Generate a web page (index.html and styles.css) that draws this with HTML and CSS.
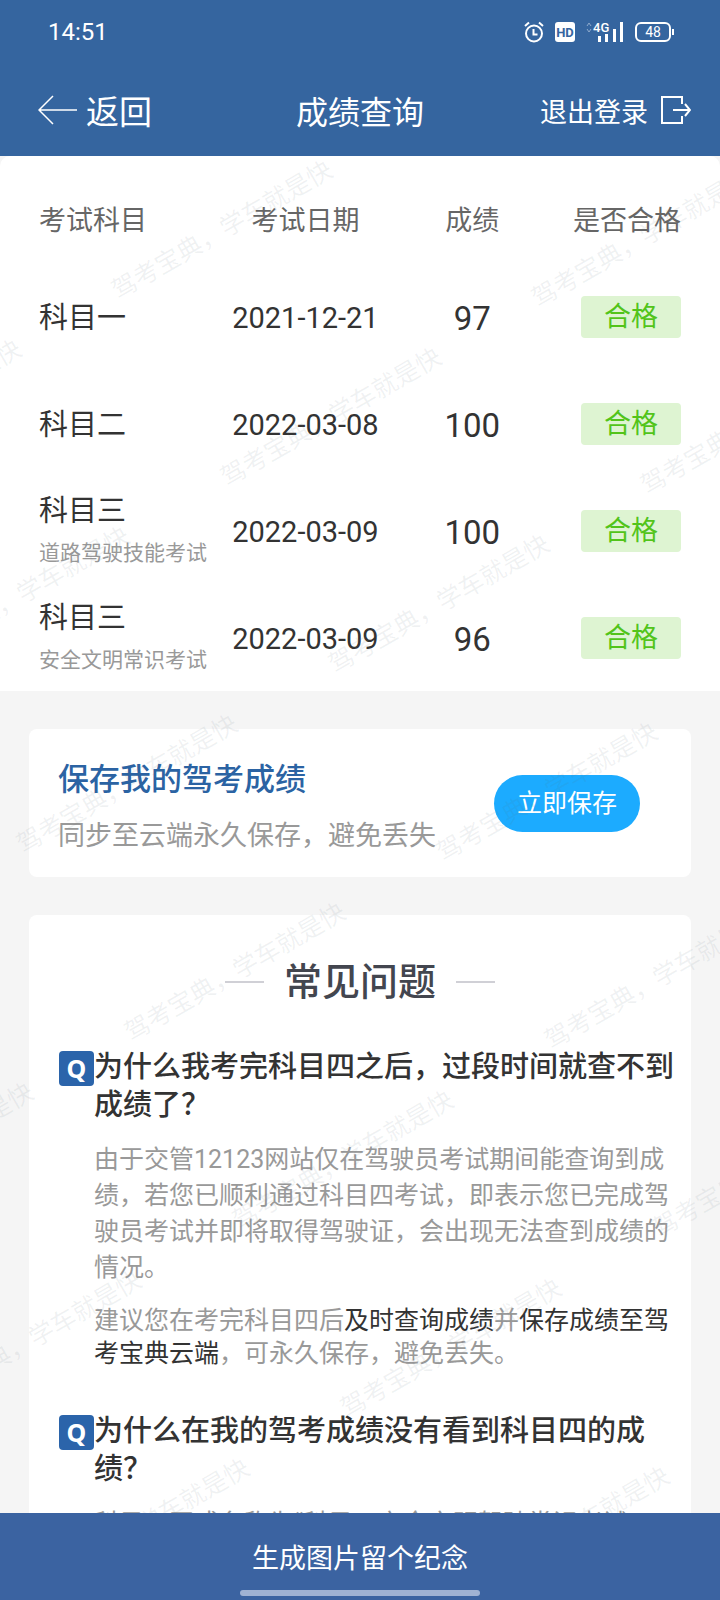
FILE: index.html
```html
<!DOCTYPE html>
<html lang="zh-CN">

<head>
    <meta charset="UTF-8">
    <meta name="viewport" content="width=device-width, initial-scale=1.0">
    <title>成绩查询</title>
    <link rel="stylesheet" href="styles.css">
</head>

<body>
    <header class="top">
        <div class="status">
            <span class="time">14:51</span>
            <div class="status-icons">
                <svg width="20" height="22" viewBox="0 0 20 22" fill="none" stroke="#fff" stroke-width="2">
                    <circle cx="10" cy="12.5" r="8" />
                    <path d="M9.5 8v5.500h4" />
                    <path d="M1 5l4-3.500M19 5l-4-3.500" />
                </svg>
                <svg width="20" height="20" viewBox="0 0 20 20">
                    <rect width="20" height="20" rx="3" fill="#fff" />
                    <text class="hd" x="10" y="15" text-anchor="middle">HD</text>
                </svg>
                <svg width="38" height="20" viewBox="0 0 38 20">
                    <path d="M1 4l2-3 2 3M1 7l2 3 2-3" fill="none" stroke="#8fabcd" stroke-width="1" />
                    <text class="net" x="7" y="10">4G</text>
                    <path d="M12 14h3v6h-3zM19 12h3v8h-3zM27 7h3v13h-3zM34 0h3v20h-3z" fill="#fff" />
                </svg>
                <svg width="39" height="20" viewBox="0 0 39 20">
                    <rect x="1" y="1" width="34" height="18" rx="5" fill="none" stroke="#fff" stroke-width="2" />
                    <rect x="37" y="7" width="2" height="6" fill="#fff" />
                    <text class="battery" x="18" y="15" text-anchor="middle">48</text>
                </svg>
            </div>
        </div>
        <nav class="nav">
            <a class="back" href="#">
                <svg width="39" height="30" viewBox="0 0 39 30" fill="none" stroke="#fff" stroke-width="1.500">
                    <path d="M15 1L1 15l14 14M1 15h38" />
                </svg>
                返回
            </a>
            <h1 class="title">成绩查询</h1>
            <a class="logout" href="#">
                退出登录
                <svg width="30" height="30" viewBox="0 0 30 30" fill="none" stroke="#fff" stroke-width="2">
                    <path d="M21 9V2H1v26h20v-7M12 15h17M24 9l5 6-5 6" />
                </svg>
            </a>
        </nav>
    </header>

    <main class="main">
        <div class="content">
            <section class="scores">
                <table class="score-table">
                    <thead>
                        <tr>
                            <th class="col-subject">考试科目</th>
                            <th class="col-date">考试日期</th>
                            <th class="col-score">成绩</th>
                            <th class="col-pass">是否合格</th>
                        </tr>
                    </thead>
                    <tbody>
                        <tr>
                            <td class="col-subject">科目一</td>
                            <td class="col-date">2021-12-21</td>
                            <td class="col-score">97</td>
                            <td class="col-pass"><span class="badge">合格</span></td>
                        </tr>
                        <tr>
                            <td class="col-subject">科目二</td>
                            <td class="col-date">2022-03-08</td>
                            <td class="col-score">100</td>
                            <td class="col-pass"><span class="badge">合格</span></td>
                        </tr>
                        <tr>
                            <td class="col-subject">科目三<small>道路驾驶技能考试</small></td>
                            <td class="col-date">2022-03-09</td>
                            <td class="col-score">100</td>
                            <td class="col-pass"><span class="badge">合格</span></td>
                        </tr>
                        <tr>
                            <td class="col-subject">科目三<small>安全文明常识考试</small></td>
                            <td class="col-date">2022-03-09</td>
                            <td class="col-score">96</td>
                            <td class="col-pass"><span class="badge">合格</span></td>
                        </tr>
                    </tbody>
                </table>
            </section>

            <section class="card save">
                <div class="save-info">
                    <h2 class="save-title">保存我的驾考成绩</h2>
                    <p class="save-text">同步至云端永久保存，避免丢失</p>
                </div>
                <button class="save-button" type="button">立即保存</button>
            </section>

            <section class="card faq">
                <h2 class="faq-title">常见问题</h2>
                <article class="faq-item">
                    <span class="q">Q</span>
                    <div>
                        <h3 class="question">为什么我考完科目四之后，过段时间就查不到成绩了？</h3>
                        <p class="answer">由于交管12123网站仅在驾驶员考试期间能查询到成绩，若您已顺利通过科目四考试，即表示您已完成驾驶员考试并即将取得驾驶证，会出现无法查到成绩的情况。</p>
                        <p class="answer tip">建议您在考完科目四后<b>及时查询成绩</b>并<b>保存成绩至驾考宝典云端</b>，可永久保存，避免丢失。</p>
                    </div>
                </article>
                <article class="faq-item">
                    <span class="q">Q</span>
                    <div>
                        <h3 class="question">为什么在我的驾考成绩没有看到科目四的成绩？</h3>
                        <p class="answer">科目四正式名称为“科目三安全文明驾驶常识考试”</p>
                    </div>
                </article>
            </section>
        </div>

        <!-- watermark over the content -->
        <svg class="watermark" aria-hidden="true">
            <defs>
                <text id="mark" transform="rotate(-30)">驾考宝典，学车就是快</text>
            </defs>
            <use href="#mark" x="118" y="144" />
            <use href="#mark" x="538" y="152" />
            <use href="#mark" x="-193" y="323" />
            <use href="#mark" x="227" y="331" />
            <use href="#mark" x="647" y="339" />
            <use href="#mark" x="-85" y="510" />
            <use href="#mark" x="335" y="518" />
            <use href="#mark" x="23" y="698" />
            <use href="#mark" x="443" y="706" />
            <use href="#mark" x="131" y="886" />
            <use href="#mark" x="551" y="894" />
            <use href="#mark" x="-181" y="1066" />
            <use href="#mark" x="239" y="1074" />
            <use href="#mark" x="659" y="1082" />
            <use href="#mark" x="-73" y="1254" />
            <use href="#mark" x="347" y="1262" />
            <use href="#mark" x="35" y="1442" />
            <use href="#mark" x="455" y="1450" />
        </svg>
    </main>

    <footer class="bottom">
        <button class="make-image" type="button">生成图片留个纪念</button>
        <div class="home-bar"></div>
    </footer>
</body>

</html>
```

FILE: styles.css
```css
* {
    box-sizing: border-box;
}

body {
    margin: 0;
    height: 100vh;
    display: flex;
    flex-direction: column;
    background-color: #f5f5f5;
    color: #333;
    font-family: Roboto, "Noto Sans CJK SC", sans-serif;
}

h1,
h2,
h3,
p {
    margin: 0;
    font-weight: 400;
}

button {
    border: none;
    font-family: inherit;
    cursor: pointer;
}

svg {
    display: block;
}

/* top bar */
.top {
    flex: none;
    background-color: #35659f;
    color: white;
}

.status {
    height: 64px;
    padding: 0 46px 0 48px;
    display: flex;
    align-items: center;
    justify-content: space-between;
}

.time {
    font-size: 24px;
}

.status-icons {
    display: flex;
    align-items: center;
    gap: 11px;
}

.status-icons svg {
    overflow: visible;
}

.hd {
    font-size: 13px;
    font-weight: 700;
    fill: #35659f;
}

.net {
    font-size: 13px;
    font-weight: 500;
    fill: white;
}

.battery {
    font-size: 14px;
    fill: white;
}

.nav {
    height: 92px;
    padding: 0 29px;
    display: grid;
    grid-template-columns: 1fr auto 1fr;
    align-items: center;
}

.nav a {
    display: flex;
    align-items: center;
    color: white;
    text-decoration: none;
}

.nav .back {
    gap: 9px;
    padding-left: 9px;
    font-size: 33px;
}

.nav .logout {
    gap: 13px;
    justify-content: flex-end;
    font-size: 27px;
}

.title {
    font-size: 32px;
}

/* scroll area */
.main {
    flex: 1;
    min-height: 0;
    position: relative;
    overflow: hidden;
}

.content {
    height: 100%;
    overflow-y: auto;
    scrollbar-width: none;
}

.watermark {
    position: absolute;
    top: 0;
    left: 0;
    width: 100%;
    height: 100%;
    pointer-events: none;
    font-size: 25px;
    fill: rgba(90, 110, 120, 0.09);
}

/* scores */
.scores {
    padding: 23px 39px 0;
    background-color: white;
    border-radius: 10px 10px 0 0;
}

.score-table {
    width: 100%;
    table-layout: fixed;
    border-collapse: collapse;
}

.score-table th {
    height: 84px;
    padding: 0;
    color: #666;
    font-size: 27px;
    font-weight: 400;
    line-height: 42px;
    vertical-align: middle;
}

.score-table td {
    height: 107px;
    padding: 3px 0 0;
    font-size: 29px;
}

.score-table .col-subject {
    width: 29%;
    text-align: left;
    line-height: 42px;
}

.score-table .col-date {
    width: 25%;
    text-align: center;
}

.score-table .col-score {
    width: 27%;
    text-align: center;
}

.score-table .col-pass {
    width: 19%;
    padding-top: 0;
    text-align: right;
    white-space: nowrap;
}

.score-table td.col-score {
    font-size: 33px;
}

.score-table small {
    display: block;
    color: #999;
    font-size: 21px;
}

.badge {
    display: inline-block;
    width: 100px;
    border-radius: 4px;
    background-color: #def4d2;
    color: #52c41a;
    font-size: 27px;
    line-height: 42px;
    text-align: center;
}

/* cards */
.card {
    margin: 38px 29px;
    background-color: white;
    border-radius: 8px;
}

.save {
    padding: 0 51px 0 29px;
    display: flex;
    align-items: center;
    justify-content: space-between;
}

.save-info {
    padding: 23px 0 13px;
}

.save-title {
    color: #2b63a3;
    font-size: 31px;
    font-weight: 500;
    line-height: 56px;
}

.save-text {
    color: #999;
    font-size: 27px;
    line-height: 56px;
}

.save-button {
    padding: 0 23px;
    border-radius: 29px;
    background-color: #1cabff;
    color: white;
    font-size: 25px;
    line-height: 57px;
}

.faq {
    padding: 39px 0;
}

.faq-title {
    display: flex;
    align-items: center;
    justify-content: center;
    gap: 20px;
    color: #43464f;
    font-size: 38px;
    font-weight: 500;
    line-height: 56px;
}

.faq-title::before,
.faq-title::after {
    content: "";
    width: 39px;
    height: 2px;
    background-color: #d0d0d6;
}

.faq-item {
    display: flex;
    align-items: flex-start;
    padding: 38px 10px 4px 30px;
}

.q {
    flex: none;
    width: 35px;
    margin-top: 3px;
    border-radius: 4px;
    background-color: #2b64aa;
    color: white;
    font-family: "Noto Sans", sans-serif;
    font-size: 25px;
    font-weight: 700;
    line-height: 35px;
    text-align: center;
}

.question {
    font-size: 29px;
    font-weight: 500;
    line-height: 38px;
}

.answer {
    margin-top: 18px;
    color: #999;
    font-size: 25px;
    line-height: 36px;
}

.tip {
    line-height: 33px;
}

.answer b {
    color: #333;
    font-weight: 400;
}

/* bottom bar */
.bottom {
    flex: none;
    background-color: #3b63a1;
}

.make-image {
    display: block;
    width: 100%;
    padding: 26px 0 11px;
    background: none;
    color: white;
    font-size: 27px;
    line-height: 40px;
}

.home-bar {
    width: 240px;
    height: 6px;
    margin: 0 auto 4px;
    border-radius: 3px;
    background-color: #9fb2d3;
}
```
